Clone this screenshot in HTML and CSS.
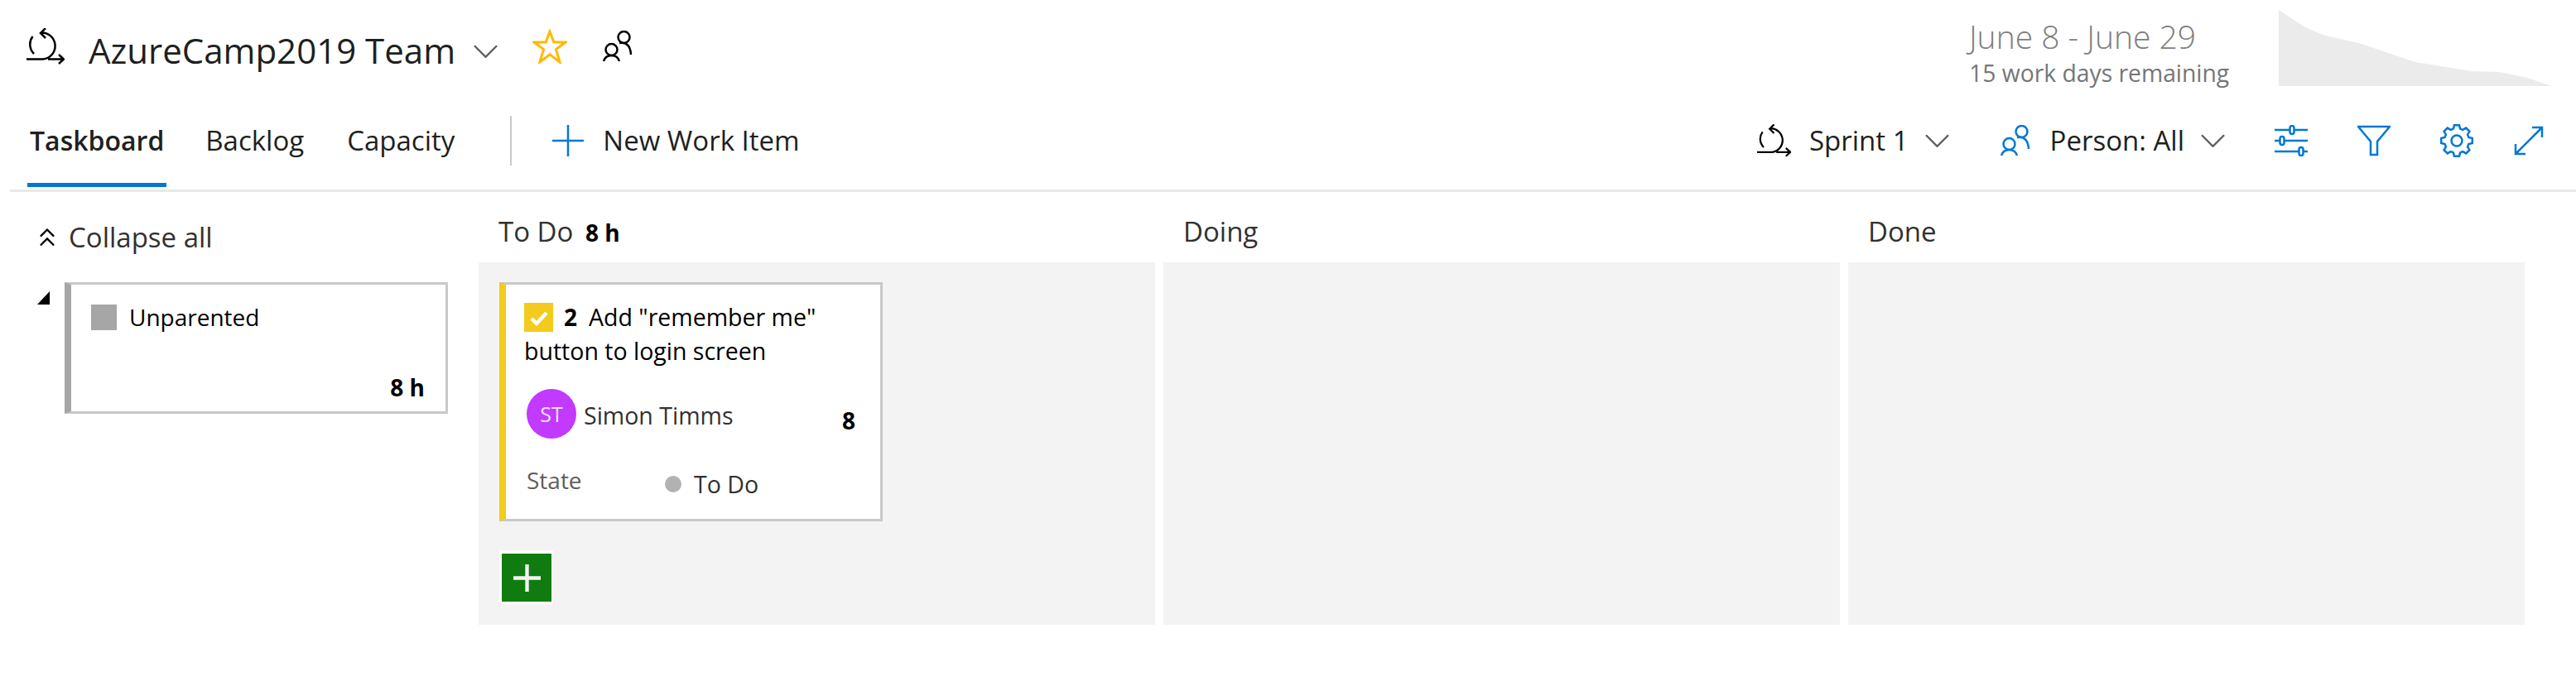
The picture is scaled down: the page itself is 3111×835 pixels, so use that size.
FILE: index.html
```html
<!doctype html>
<html lang="en">
<head>
	<meta charset="UTF-8">
	<title>Taskboard</title>
	<link rel="stylesheet" href="styles.css">
</head>
<body>
	<header class="head">
		<div class="head-left">
			<svg class="ico-sprint" viewBox="0 0 46 44"><path d="M0 37.5H20A16 16 0 1 0 17 5.5M23 0L17 6L23 12M7.5 10A16 16 0 0 0 9 31M26 37.5H45M39 32L45 37.5L39 43"/></svg>
			<h1 class="title">AzureCamp2019 Team</h1>
			<svg class="chev chev-title" viewBox="0 0 30 16"><path d="M1 1L15 15L29 1"/></svg>
			<svg class="ico-star" viewBox="0 0 42 42"><polygon points="21,3 25.800,16 40,16 28.500,24.600 33,40 21,30.800 9,40 13.500,24.600 2,16 16.200,16"/></svg>
			<svg class="ico-people" viewBox="0 0 36 38"><circle cx="10.500" cy="23" r="7"/><path d="M1 37Q3 30 10.500 30Q18 30 20 37"/><circle cx="25.500" cy="8" r="7"/><path d="M20 15Q33 13 34 29"/></svg>
		</div>
		<div class="sprint-info">
			<div class="sprint-text">
				<div class="sprint-dates">June 8 - June 29</div>
				<div class="sprint-left">15 work days remaining</div>
			</div>
			<svg class="burndown" viewBox="0 0 330 92"><polygon points="0,0 32,21 56,31 97,40 165,63 232,74 266,75 300,82 330,92 0,92"/></svg>
		</div>
	</header>

	<nav class="bar">
		<a class="tab active">Taskboard</a>
		<a class="tab">Backlog</a>
		<a class="tab">Capacity</a>
		<span class="sep"></span>
		<a class="new-item">
			<svg class="ico-plus" viewBox="0 0 38 38"><path d="M19 0V38M0 19H38"/></svg>
			New Work Item
		</a>
		<div class="bar-right">
			<a class="pick pick-sprint">
				<svg class="ico-sprint" viewBox="0 0 46 44"><path d="M0 37.5H20A16 16 0 1 0 17 5.5M23 0L17 6L23 12M7.5 10A16 16 0 0 0 9 31M26 37.5H45M39 32L45 37.5L39 43"/></svg>
				Sprint 1
				<svg class="chev" viewBox="0 0 30 16"><path d="M1 1L15 15L29 1"/></svg>
			</a>
			<a class="pick pick-person">
				<svg class="ico-people blue" viewBox="0 0 36 38"><circle cx="10.500" cy="23" r="7"/><path d="M1 37Q3 30 10.500 30Q18 30 20 37"/><circle cx="25.500" cy="8" r="7"/><path d="M20 15Q33 13 34 29"/></svg>
				Person: All
				<svg class="chev" viewBox="0 0 30 16"><path d="M1 1L15 15L29 1"/></svg>
			</a>
			<svg class="tool tool-sliders" viewBox="0 0 40 38"><path d="M0 6H40M0 19H40M0 32H40"/><rect x="18.500" y="1" width="5" height="10" rx="2.500"/><rect x="6.500" y="14" width="5" height="10" rx="2.500"/><rect x="29.500" y="27" width="5" height="10" rx="2.500"/></svg>
			<svg class="tool tool-funnel" viewBox="0 0 40 36"><polygon points="1,1 39,1 24,19 24,35 16,35 16,19"/></svg>
			<svg class="tool tool-gear" viewBox="-20 -20 40 40"><polygon points="-4.100,-14.400 -3,-18.800 3,-18.800 4.100,-14.400 7.300,-13.100 11.200,-15.400 15.400,-11.200 13.100,-7.300 14.400,-4.100 18.800,-3 18.800,3 14.400,4.100 13.100,7.300 15.400,11.200 11.200,15.400 7.300,13.100 4.100,14.400 3,18.800 -3,18.800 -4.100,14.400 -7.300,13.100 -11.200,15.400 -15.400,11.200 -13.100,7.300 -14.400,4.100 -18.800,3 -18.800,-3 -14.400,-4.100 -13.100,-7.300 -15.400,-11.200 -11.200,-15.400 -7.300,-13.100"/><circle r="6.500"/></svg>
			<svg class="tool tool-expand" viewBox="0 0 36 36"><path d="M2 34L34 2M22 2H34V14M2 22V34H14"/></svg>
		</div>
	</nav>

	<main class="board">
		<div class="side">
			<div class="collapse">
				<svg class="ico-collapse" viewBox="0 0 20 23"><path d="M1 10L10 1L19 10M1 22L10 13L19 22"/></svg>
				Collapse all
			</div>
			<div class="parent-row">
				<span class="tri"></span>
				<div class="parent-card">
					<div class="parent-name"><span class="parent-box"></span>Unparented</div>
					<div class="hours">8 h</div>
				</div>
			</div>
		</div>

		<section class="col">
			<div class="col-head">To Do <b>8 h</b></div>
			<div class="col-body">
				<div class="card">
					<div class="card-title">
						<div class="title-first">
							<svg class="ico-check" viewBox="0 0 35 35"><rect width="35" height="35"/><path d="M9 19L15 25L27 12"/></svg>
							<b>2</b>
							<span>Add "remember me"</span>
						</div>
						<div>button to login screen</div>
					</div>
					<div class="card-owner">
						<span class="avatar">ST</span>
						<span class="owner-name">Simon Timms</span>
						<b class="remaining">8</b>
					</div>
					<div class="card-state">
						<span class="state-label">State</span>
						<span class="state-value"><i class="dot"></i>To Do</span>
					</div>
				</div>
				<button class="add-btn"><svg viewBox="0 0 34 34"><path d="M17 0V34M0 17H34"/></svg></button>
			</div>
		</section>
		<section class="col">
			<div class="col-head">Doing</div>
			<div class="col-body"></div>
		</section>
		<section class="col">
			<div class="col-head">Done</div>
			<div class="col-body"></div>
		</section>
	</main>
</body>
</html>
```

FILE: styles.css
```css
*{
	box-sizing: border-box;
}
body{
	margin: 0;
	background: white;
	color: #201f1e;
	font-family: "Open Sans", "Noto Sans", sans-serif;
	font-size: 28px;
}
svg{
	display: block;
	flex: none;
	fill: none;
	stroke-width: 2.5;
}

/* top row */
.head{
	display: flex;
	justify-content: space-between;
	height: 120px;
	padding: 12px 29px 0 32px;
}
.head-left{
	display: flex;
	align-items: center;
	height: 88px;
}
.ico-sprint{
	width: 46px;
	height: 44px;
	stroke: black;
}
.title{
	margin: 8px 0 0 29px;
	font-size: 42px;
	font-weight: 400;
	white-space: nowrap;
}
.chev{
	width: 29px;
	height: 16px;
	stroke: #605e5c;
}
.chev-title{
	margin: 12px 0 0 22px;
}
.ico-star{
	width: 42px;
	height: 42px;
	margin-left: 42px;
	stroke: #ffb900;
	stroke-width: 3;
}
.ico-people{
	width: 36px;
	height: 38px;
	margin-left: 43px;
	stroke: black;
}
.sprint-info{
	display: flex;
}
.sprint-text{
	width: 374px;
}
.sprint-dates{
	margin-top: 8px;
	height: 48px;
	color: #807e7c;
	font-size: 39px;
	font-weight: 300;
	line-height: 48px;
	white-space: nowrap;
}
.sprint-left{
	height: 40px;
	color: #767676;
	font-size: 28.300px;
	line-height: 40px;
	white-space: nowrap;
}
.burndown{
	width: 330px;
	height: 92px;
}
.burndown polygon{
	fill: #ebebeb;
}

/* tabs and tools */
.bar{
	display: flex;
	align-items: center;
	height: 112px;
	margin-left: 12px;
	padding: 0 39px 10px 0;
	border-bottom: 3px solid #e8e8e8;
}
.tab{
	position: relative;
	margin-right: 52px;
	font-size: 33px;
	white-space: nowrap;
}
.tab:first-child{
	margin-left: 24px;
	margin-right: 50px;
}
.active{
	font-size: 32px;
	font-weight: 600;
}
.active:after{
	content: "";
	position: absolute;
	left: -3px;
	right: -3px;
	top: 73px;
	height: 5px;
	background: #0078d4;
}
.sep{
	width: 2px;
	height: 60px;
	margin-left: 15px;
	background: #c8c8c8;
}
.new-item{
	display: flex;
	align-items: center;
	margin-left: 49px;
	font-size: 33px;
	white-space: nowrap;
}
.ico-plus{
	width: 38px;
	height: 38px;
	margin-right: 23px;
	stroke: #0078d4;
}
.bar-right{
	display: flex;
	align-items: center;
	margin-left: auto;
}
.pick{
	display: flex;
	align-items: center;
	font-size: 33px;
	white-space: nowrap;
}
.pick .ico-sprint{
	width: 41px;
	height: 40px;
	margin-right: 22px;
}
.pick .chev{
	margin-left: 20px;
}
.pick-person{
	margin-left: 62px;
}
.pick-person .ico-people{
	margin: 0 24px 0 0;
}
.blue{
	stroke: #0078d4;
}
.tool{
	width: 40px;
	height: 38px;
	stroke: #0078d4;
	fill: white;
}
.tool-sliders,
.tool-funnel,
.tool-gear{
	margin-left: 60px;
}
.tool-gear{
	height: 40px;
}
.tool-expand{
	width: 36px;
	height: 36px;
	margin-left: 49px;
}

/* board */
.board{
	display: grid;
	grid-template-columns: 568px 817px 817px 817px;
	column-gap: 10px;
}
.side{
	padding-left: 45px;
}
.collapse{
	display: flex;
	align-items: center;
	height: 109px;
	font-size: 33px;
	color: #323130;
}
.ico-collapse{
	width: 18px;
	height: 22px;
	margin: 0 17px 0 3px;
	stroke: black;
}
.parent-row{
	display: flex;
	align-items: flex-start;
}
.tri{
	width: 0;
	height: 0;
	margin: 11px 18px 0 0;
	border-style: solid;
	border-width: 0 0 16px 15px;
	border-color: transparent transparent black transparent;
}
.parent-card{
	display: flex;
	flex-direction: column;
	justify-content: space-between;
	width: 463px;
	height: 159px;
	padding: 20px 25px 9px 24px;
	border: 3px solid #c8c8c8;
	border-left: 8px solid #a6a6a6;
}
.parent-name{
	display: flex;
	align-items: center;
	color: black;
	font-size: 28px;
	line-height: 38px;
}
.parent-box{
	width: 31px;
	height: 31px;
	margin-right: 15px;
	background: #a6a6a6;
}
.hours{
	text-align: right;
	color: black;
	font-size: 28px;
	font-weight: 700;
	line-height: 40px;
}

.col-head{
	height: 85px;
	padding: 24px 0 0 24px;
	font-size: 33px;
	line-height: 48px;
	color: #323130;
}
.col-head b{
	margin-left: 6px;
	font-size: 28px;
	color: black;
}
.col-body{
	height: 438px;
	padding: 24px 0 0 25px;
	background: #f3f3f3;
}
.card{
	width: 463px;
	height: 289px;
	padding: 19px 10px 0 22px;
	background: white;
	border: 3px solid #c8c8c8;
	border-left: 8px solid #f2cb1d;
	color: black;
}
.card-title{
	height: 82px;
	font-size: 28.500px;
	line-height: 41px;
}
.title-first{
	display: flex;
	align-items: center;
}
.ico-check{
	width: 35px;
	height: 35px;
	margin: 0 13px 0 0;
	stroke: none;
}
.ico-check rect{
	fill: #f2cb1d;
}
.ico-check path{
	stroke: white;
	stroke-width: 4.500;
}
.title-first b{
	margin-right: 14px;
	font-size: 28px;
}
.card-owner{
	display: flex;
	align-items: center;
	height: 60px;
	margin: 25px 0 0 3px;
}
.avatar{
	width: 60px;
	height: 60px;
	border-radius: 50%;
	background: #c239ff;
	color: #f6e0ff;
	font-size: 25px;
	line-height: 60px;
	text-align: center;
}
.owner-name{
	margin: 4px 0 0 9px;
	color: #323130;
	font-size: 28.500px;
}
.remaining{
	margin: 16px 0 0 auto;
	padding-right: 20px;
	font-size: 28px;
}
.card-state{
	display: flex;
	align-items: center;
	margin: 31px 0 0 3px;
}
.state-label{
	width: 167px;
	margin-bottom: 10px;
	color: #605e5c;
	font-size: 28px;
}
.state-value{
	display: flex;
	align-items: center;
	color: #323130;
	font-size: 28.500px;
}
.dot{
	width: 20px;
	height: 20px;
	margin-right: 15px;
	border-radius: 50%;
	background: #b2b2b2;
}
.add-btn{
	display: block;
	width: 65px;
	height: 65px;
	margin-top: 35px;
	padding: 0;
	border: solid white;
	border-width: 4px 2px 3px 3px;
	background: #107c10;
}
.add-btn svg{
	width: 33px;
	height: 33px;
	margin: auto;
	stroke: #f3f3f3;
	stroke-width: 4.500;
}
```
